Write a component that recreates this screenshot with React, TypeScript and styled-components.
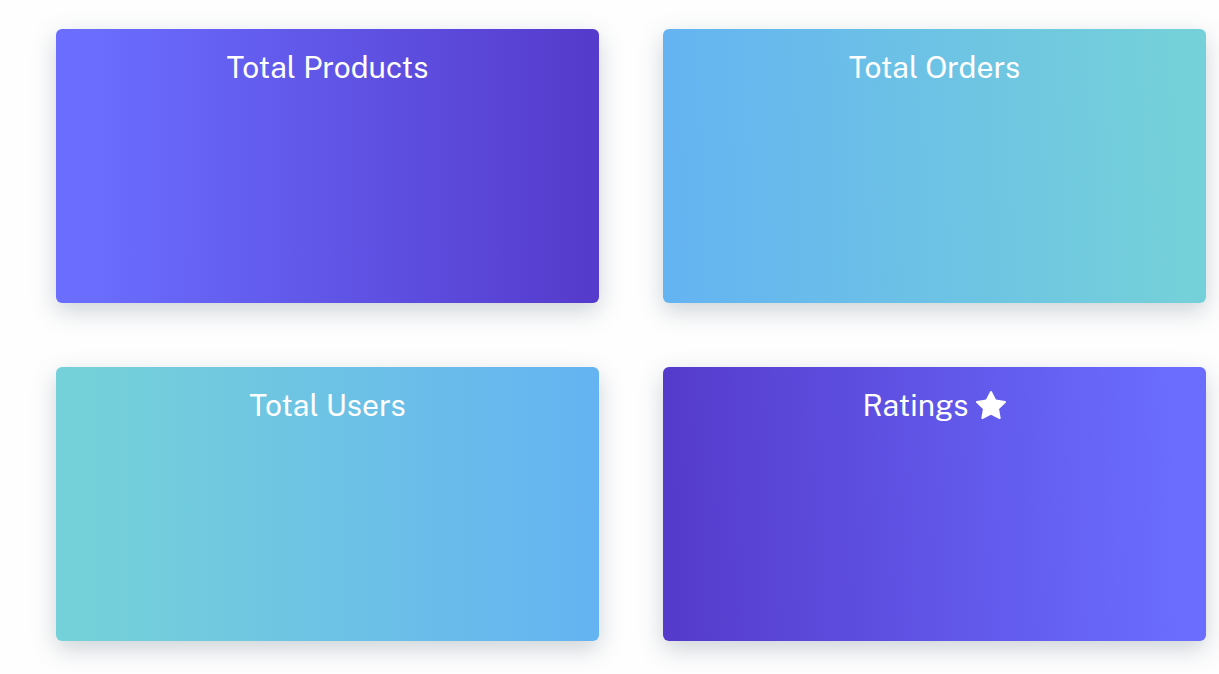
import React from "react";
import styled, { createGlobalStyle } from "styled-components";
import { BsStarFill } from "react-icons/bs";

const GlobalStyle = createGlobalStyle`
  *, *::before, *::after { box-sizing: border-box; }
  body {
    margin: 0;
    background: #fefefe;
    font-family: "Public Sans", Inter, "Liberation Sans", sans-serif;
  }
`;

const Dashboard = styled.main`
  display: grid;
  grid-template-columns: repeat(2, minmax(0, 1fr));
  gap: 64px;
  padding: 29px 13px 32px 56px;
`;

const Card = styled.section<{ $gradient: string }>`
  min-height: 274px;
  padding: 20px 24px;
  border-radius: 6px;
  background: linear-gradient(${({ $gradient }) => $gradient});
  box-shadow: 0 8px 24px rgba(60, 85, 105, 0.26);
  color: #ffffff;
`;

const CardTitle = styled.h2`
  display: flex;
  align-items: center;
  justify-content: center;
  gap: 8px;
  margin: 0;
  font-size: 30px;
  line-height: 36px;
  font-weight: 400;
`;

const StarIcon = styled(BsStarFill)`
  width: 30px;
  height: 30px;
`;

const cards = [
  { title: "Total Products", gradient: "90deg, #6a6dff 7%, #553acb 100%" },
  { title: "Total Orders", gradient: "88deg, #64b3f2 0%, #74d0d9 94%" },
  { title: "Total Users", gradient: "90deg, #74d0d9 7%, #64b3f2 100%" },
  { title: "Ratings", gradient: "88deg, #553acb 0%, #6a6dff 94%", starred: true },
];

export default function App() {
  return (
    <>
      <GlobalStyle />
      <Dashboard>
        {cards.map(({ title, gradient, starred }) => (
          <Card key={title} $gradient={gradient}>
            <CardTitle>
              {title}
              {starred && <StarIcon aria-hidden="true" />}
            </CardTitle>
          </Card>
        ))}
      </Dashboard>
    </>
  );
}
